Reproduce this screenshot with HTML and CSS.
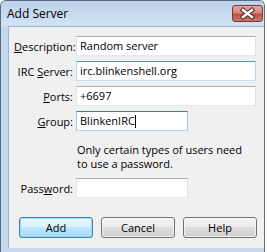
FILE: index.html
```html
<!DOCTYPE html>
<html>
<head>
<meta charset="utf-8">
<link rel="stylesheet" href="styles.css">
</head>
<body>
<div class="window">
  <div class="titlebar">
    <span class="title">Add Server</span>
    <div class="close">
      <svg width="17" height="13" viewBox="0 0 17 13">
        <path d="M4 3 L13 10 M13 3 L4 10" stroke="#4a2a2a" stroke-width="4.5" stroke-linecap="square" fill="none"/>
        <path d="M4 3 L13 10 M13 3 L4 10" stroke="#ffffff" stroke-width="2.4" stroke-linecap="square" fill="none"/>
      </svg>
    </div>
  </div>
  <div class="client">
    <div class="form">
      <div class="lbl"><u>D</u>escription:</div>
      <div class="field wide">Random server</div>
      <div class="lbl">IRC <u>S</u>erver:</div>
      <div class="field wide hover">irc.blinkenshell.org</div>
      <div class="lbl"><u>P</u>orts:</div>
      <div class="field wide">+6697</div>
      <div class="lbl"><u>G</u>roup:</div>
      <div class="field short focus">BlinkenIRC<span class="caret"></span></div>
    </div>
    <p class="note">Only certain types of users need<br>to use a password.</p>
    <div class="form pw">
      <div class="lbl">Pass<u>w</u>ord:</div>
      <div class="field short"></div>
    </div>
    <div class="buttons">
      <div class="btn default">Add</div>
      <div class="btn">Cancel</div>
      <div class="btn">Help</div>
    </div>
  </div>
</div>
</body>
</html>
```

FILE: styles.css
```css
html, body {
  margin: 0;
  padding: 0;
  background: #ffffff;
}
body {
  font-family: "Open Sans", "Noto Sans", sans-serif;
  font-size: 11px;
  color: #000;
}
.window {
  box-sizing: border-box;
  width: 265px;
  height: 252px;
  border: 1px solid #5a6a80;
  border-bottom: none;
  border-radius: 6px 6px 0 0;
  background: #c5d8ee;
  display: flex;
  flex-direction: column;
}
.titlebar {
  height: 25px;
  display: flex;
  align-items: flex-start;
  justify-content: space-between;
  padding: 0 1px 0 6px;
  background: linear-gradient(#bcd2ea, #d3e2f3);
  border-radius: 5px 5px 0 0;
}
.title {
  font-size: 12px;
  line-height: 16px;
  color: #000;
  margin-top: 5px;
}
.close {
  box-sizing: border-box;
  width: 31px;
  height: 17px;
  margin-top: 4px;
  border: 1px solid #6f3a3a;
  border-radius: 3px;
  background: linear-gradient(#e4a79f 0%, #d7887c 45%, #c24f3e 55%, #cf7664 100%);
  display: flex;
  align-items: center;
  justify-content: center;
}
.close svg { display: block; }
.client {
  flex: 1;
  margin: 0 0 4px 7px;
  background: #f0f0f0;
  border-top: 1px solid #9fb4cc;
  border-left: 1px solid #9fb4cc;
  padding: 9px 0 0 5px;
}
.form {
  display: grid;
  grid-template-columns: 59px auto;
  column-gap: 3px;
  row-gap: 5px;
  align-items: center;
}
.lbl {
  text-align: right;
  white-space: nowrap;
}
.lbl u { text-decoration-thickness: 1px; text-underline-offset: 1px; }
.field {
  box-sizing: border-box;
  height: 20px;
  background: #fff;
  border: 1px solid;
  border-color: #abadb3 #dbdfe6 #e3e9ef #e2e3ea;
  padding: 0 3px;
  line-height: 18px;
  white-space: nowrap;
}
.field.wide { width: 180px; }
.field.short { width: 112px; }
.field.hover { border-color: #5794bf #b7d7eb #c7e2f1 #b7d7eb; }
.field.focus { border-color: #3d7bad #a4c9e3 #b7d9ed #a4c9e3; }
.caret {
  display: inline-block;
  width: 1px;
  height: 13px;
  background: #000;
  vertical-align: -3px;
}
.note {
  margin: 12px 0 7px 63px;
  line-height: 14px;
}
.buttons {
  display: flex;
  gap: 8px;
  margin: 19px 0 0 5px;
}
.btn {
  box-sizing: border-box;
  width: 74px;
  height: 21px;
  border: 1px solid #707070;
  border-radius: 3px;
  background: linear-gradient(#f2f2f2 0%, #ebebeb 50%, #dddddd 50%, #cfcfcf 100%);
  box-shadow: inset 0 0 0 1px rgba(255,255,255,0.7);
  text-align: center;
  line-height: 19px;
}
.btn.default {
  border-color: #3c7fb1;
  background: linear-gradient(#eaf6fd 0%, #d9f0fc 50%, #bee6fd 50%, #a7d9f5 100%);
  box-shadow: inset 0 0 0 1px #9fdcf6;
}
```
